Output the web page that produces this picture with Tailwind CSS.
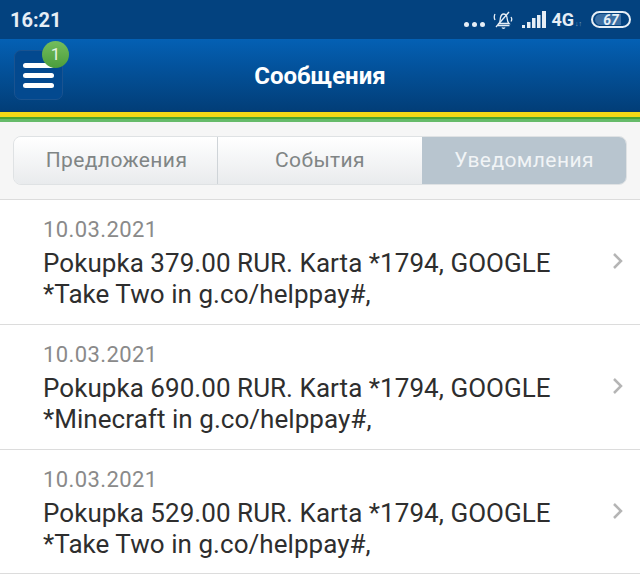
<!DOCTYPE html>
<html lang="en">

<head>
    <meta charset="UTF-8">
    <meta name="viewport" content="width=device-width, initial-scale=1.0">
    <title>Сообщения</title>
    <script src="https://cdn.jsdelivr.net/npm/@tailwindcss/browser@4"></script>
</head>

<body class="bg-white font-['Roboto',sans-serif] w-[640px] h-[581px] overflow-hidden">
    <!-- status bar -->
    <div class="h-[39px] bg-[#03427f] flex items-center justify-between pl-[10px] pr-[9px] text-[#e6eef6]">
        <span class="text-[20px] font-bold leading-none">16:21</span>
        <div class="flex items-center">
            <div class="flex gap-[3px] mt-[10px]">
                <span class="w-[5px] h-[5px] rounded-full bg-[#e6eef6]"></span>
                <span class="w-[5px] h-[5px] rounded-full bg-[#e6eef6]"></span>
                <span class="w-[5px] h-[5px] rounded-full bg-[#e6eef6]"></span>
            </div>
            <svg class="ml-[8px]" width="20" height="20" viewBox="0 0 20 20" fill="none" stroke="#e6eef6" stroke-width="1.3">
                <path d="M6 13.500c1.500-1.500 1-4 1.500-6 .5-2 1.500-3.500 3-3.500 2 0 3.200 1.500 3.500 3.500.3 2.500.3 4.500 2 6z" />
                <path d="M5 15.500h11.500M9 17.500c.5 1 2.500 1 3 0" />
                <path d="M3 17L16 2" />
                <path d="M2 4c-1 2-1 4 0 6M18 7c1 1.500 1 3 0 4.500" />
            </svg>
            <svg class="ml-[9px]" width="24" height="20" viewBox="0 0 24 20" fill="#e6eef6">
                <rect x="0" y="15" width="3" height="3" />
                <rect x="5" y="12" width="3.500" height="6" />
                <rect x="10" y="8" width="3.500" height="10" />
                <rect x="15" y="5" width="3.500" height="13" />
                <rect x="20" y="1" width="4" height="17" />
            </svg>
            <span class="ml-[5px] text-[18px] font-bold leading-none">4G</span>
            <span class="text-[7px] leading-none mt-[9px] ml-[1px] w-[9px] text-[#7fa3c6]">↓↑</span>
            <div class="ml-[7px] w-[40px] h-[17px] rounded-full border-2 border-[#e6eef6] p-[1px] relative overflow-hidden">
                <div class="h-full w-[26px] ml-[1px] rounded-l-full bg-[#3a6ea3]"></div>
                <span class="absolute inset-0 flex items-center justify-center text-[14px] font-bold italic leading-none">67</span>
            </div>
        </div>
    </div>

    <!-- header -->
    <div class="h-[72px] bg-gradient-to-b from-[#0460b4] to-[#023e78] flex items-center relative">
        <div class="relative ml-[14px] w-[49px] h-[50px] rounded-[7px] border border-[#1a5390] bg-[#03498f] flex flex-col items-center justify-center gap-[5px]">
            <span class="w-[31px] h-[5px] rounded-full bg-white"></span>
            <span class="w-[31px] h-[5px] rounded-full bg-white"></span>
            <span class="w-[31px] h-[5px] rounded-full bg-white"></span>
            <span class="absolute top-[-10px] left-[27px] w-[27px] h-[27px] rounded-full bg-gradient-to-b from-[#74bd5c] to-[#4b9d3c] text-[#e9f4e4] text-[17px] flex items-center justify-center">1</span>
        </div>
        <h1 class="absolute inset-x-0 top-[25px] text-center text-white text-[24px] font-bold leading-none">Сообщения</h1>
    </div>

    <!-- stripes -->
    <div class="h-[1px] bg-[#0b3d6b]"></div>
    <div class="h-[5px] bg-[#f7d917]"></div>
    <div class="h-[2px] bg-[#4fa52f]"></div>
    <div class="h-[3px] bg-[#66bb6a]"></div>

    <!-- tabs -->
    <div class="h-[78px] bg-[#f6f6f6] border-b border-[#dcdcdc] px-[13px] pt-[14px]">
        <div class="flex h-[49px] rounded-[8px] border border-[#dfe2e4] overflow-hidden text-[21px] tracking-[0.4px]">
            <div class="w-[204px] pt-[1px] pl-[2px] flex items-center justify-center bg-gradient-to-b from-white to-[#e9ebed] text-[#808585] border-r border-[#cfd4d8]">Предложения</div>
            <div class="w-[204px] pt-[1px] flex items-center justify-center bg-gradient-to-b from-white to-[#e9ebed] text-[#808585]">События</div>
            <div class="flex-1 pt-[1px] flex items-center justify-center bg-[#b8c5cf] text-[#f1f4f6]">Уведомления</div>
        </div>
    </div>

    <!-- messages -->
    <div class="text-[26px] leading-[31px] tracking-[0.05px] text-[#2e2e2e]">
        <div class="h-[125px] border-b border-[#dcdcdc] pl-[43px] pr-[16px] pt-[15px] flex justify-between">
            <div>
                <div class="text-[#8a8a8a] text-[22px] tracking-[0.4px] leading-[30px]">10.03.2021</div>
                <div class="mt-[3px]">Pokupka 379.00 RUR. Karta *1794, GOOGLE<br>*Take Two in g.co/helppay#,</div>
            </div>
            <svg width="12" height="18" viewBox="0 0 12 18" fill="none" stroke="#b5b5b5" stroke-width="2.500" class="mt-[37px]"><path d="M2 2l7 7-7 7" /></svg>
        </div>
        <div class="h-[125px] border-b border-[#dcdcdc] pl-[43px] pr-[16px] pt-[15px] flex justify-between">
            <div>
                <div class="text-[#8a8a8a] text-[22px] tracking-[0.4px] leading-[30px]">10.03.2021</div>
                <div class="mt-[3px]">Pokupka 690.00 RUR. Karta *1794, GOOGLE<br>*Minecraft in g.co/helppay#,</div>
            </div>
            <svg width="12" height="18" viewBox="0 0 12 18" fill="none" stroke="#b5b5b5" stroke-width="2.500" class="mt-[37px]"><path d="M2 2l7 7-7 7" /></svg>
        </div>
        <div class="h-[124px] border-b border-[#dcdcdc] pl-[43px] pr-[16px] pt-[15px] flex justify-between">
            <div>
                <div class="text-[#8a8a8a] text-[22px] tracking-[0.4px] leading-[30px]">10.03.2021</div>
                <div class="mt-[3px]">Pokupka 529.00 RUR. Karta *1794, GOOGLE<br>*Take Two in g.co/helppay#,</div>
            </div>
            <svg width="12" height="18" viewBox="0 0 12 18" fill="none" stroke="#b5b5b5" stroke-width="2.500" class="mt-[37px]"><path d="M2 2l7 7-7 7" /></svg>
        </div>
    </div>
</body>

</html>
